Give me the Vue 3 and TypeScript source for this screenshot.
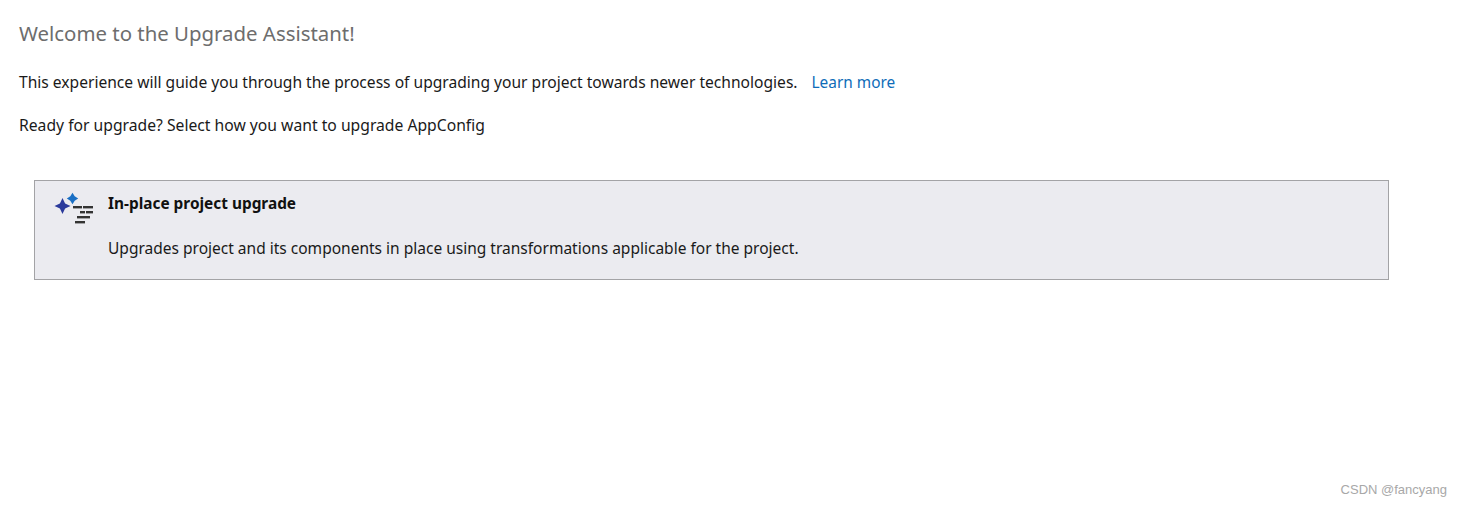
<script setup lang="ts">
const title = 'Welcome to the Upgrade Assistant!'
const projectName = 'AppConfig'
</script>

<template>
  <div class="page">
    <h1 class="title">{{ title }}</h1>
    <p class="intro">
      <span>This experience will guide you through the process of upgrading your project towards newer technologies.</span>
      <a class="learn-more" href="#">Learn more</a>
    </p>
    <p class="prompt">Ready for upgrade? Select how you want to upgrade {{ projectName }}</p>

    <div class="option-card">
      <svg class="option-icon" width="42" height="34" viewBox="0 0 42 34">
        <path d="M9.5 6 L12.1 11.4 L17.5 14 L12.1 16.6 L9.5 22 L6.9 16.6 L1.5 14 L6.9 11.4 Z" fill="#2b3a9b" />
        <path d="M19.5 0.8 L21.7 4.3 L25.2 6.5 L21.7 8.7 L19.5 12.2 L17.3 8.7 L13.8 6.5 L17.3 4.3 Z" fill="#1a6fc4" />
        <g fill="#333">
          <rect x="20" y="14" width="9" height="2.4" />
          <rect x="30" y="14" width="10" height="2.4" />
          <rect x="27" y="19" width="5" height="2.4" />
          <rect x="33" y="19" width="7" height="2.4" />
          <rect x="24" y="24" width="13" height="2.4" />
          <rect x="22" y="29" width="10" height="2.4" />
        </g>
      </svg>
      <div class="option-body">
        <div class="option-title">In-place project upgrade</div>
        <div class="option-desc">Upgrades project and its components in place using transformations applicable for the project.</div>
      </div>
    </div>

    <div class="watermark">CSDN @fancyang</div>
  </div>
</template>

<style>
html, body {
  margin: 0;
  background: #fff;
}
</style>

<style scoped>
.page {
  position: relative;
  box-sizing: border-box;
  height: 506px;
  padding: 19px 0 0 19px;
  overflow: hidden;
  font-family: "Noto Sans", "Open Sans", sans-serif;
  font-size: 15.6px;
  color: #1a1a1a;
}
.title {
  margin: 0;
  font-size: 20.4px;
  line-height: 28px;
  font-weight: 400;
  color: #6d6d6d;
}
.intro {
  margin: 24px 0 0;
  line-height: 22px;
}
.learn-more {
  margin-left: 14px;
  font-size: 15.4px;
  color: #0e6cb8;
  text-decoration: none;
}
.prompt {
  margin: 20px 0 0;
  font-size: 15.7px;
  line-height: 22px;
}
.option-card {
  display: flex;
  box-sizing: border-box;
  width: 1355px;
  height: 100px;
  margin: 44px 0 0 15px;
  padding: 11px 0 0 18px;
  border: 1px solid #a3a3a6;
  background: #ebebf0;
}
.option-icon {
  flex: none;
  margin-right: 13px;
}
.option-body {
  padding-top: 1px;
  line-height: 22px;
}
.option-title {
  font-size: 15.4px;
  font-weight: 700;
  color: #111;
}
.option-desc {
  margin-top: 22px;
  font-size: 15.53px;
}
.watermark {
  position: absolute;
  right: 15px;
  bottom: 9px;
  font-family: "Liberation Sans", sans-serif;
  font-size: 13px;
  color: #a8a8a8;
}
</style>
